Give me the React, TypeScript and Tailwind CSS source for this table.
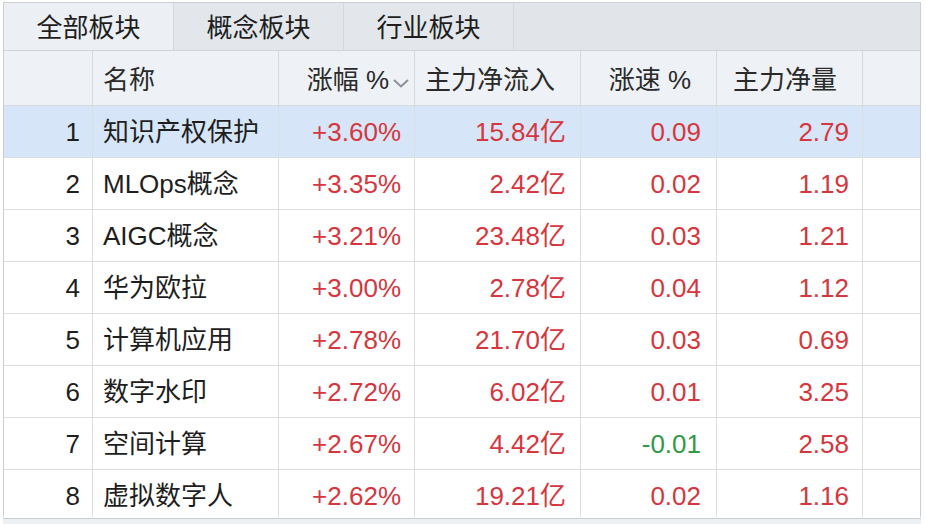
import React from "react";

type Row = {
  name: string;
  pct: string;
  inflow: string;
  speed: string;
  net: string;
};

const rows: Row[] = [
  { name: "知识产权保护", pct: "+3.60%", inflow: "15.84亿", speed: "0.09", net: "2.79" },
  { name: "MLOps概念", pct: "+3.35%", inflow: "2.42亿", speed: "0.02", net: "1.19" },
  { name: "AIGC概念", pct: "+3.21%", inflow: "23.48亿", speed: "0.03", net: "1.21" },
  { name: "华为欧拉", pct: "+3.00%", inflow: "2.78亿", speed: "0.04", net: "1.12" },
  { name: "计算机应用", pct: "+2.78%", inflow: "21.70亿", speed: "0.03", net: "0.69" },
  { name: "数字水印", pct: "+2.72%", inflow: "6.02亿", speed: "0.01", net: "3.25" },
  { name: "空间计算", pct: "+2.67%", inflow: "4.42亿", speed: "-0.01", net: "2.58" },
  { name: "虚拟数字人", pct: "+2.62%", inflow: "19.21亿", speed: "0.02", net: "1.16" },
];

const tabs = ["全部板块", "概念板块", "行业板块"];

const cols = "grid grid-cols-[89px_186px_136px_166px_136px_146px_1fr]";

function Chevron() {
  return (
    <svg width="18" height="10" viewBox="0 0 18 10" className="ml-[3px] mt-[6px]">
      <polyline points="2,2 9,8.5 16,2" fill="none" stroke="#8a9098" strokeWidth="2" />
    </svg>
  );
}

function HeadCell({ label, sort }: { label: string; sort?: boolean }) {
  return (
    <div className="flex items-center justify-end border-r border-[#d6dade] pr-[4px] pt-[4px]">
      <span>{label}</span>
      {sort ? <Chevron /> : <span className="w-[21px]" />}
    </div>
  );
}

export default function App() {
  return (
    <div
      className="w-[926px] h-[524px] bg-white pt-[2px] overflow-hidden text-[26px] leading-none text-[#1e1e1e]"
      style={{ fontFamily: '"Liberation Sans", "Noto Sans CJK SC", sans-serif' }}
    >
      <div className="ml-[3px] w-[918px] border border-b-0 border-[#c9ced4]">
        {/* tabs */}
        <div className="flex h-[48px] bg-[#e1e5ea] border-b border-[#cfd4da]">
          {tabs.map((t, i) => (
            <div
              key={t}
              className={`w-[170px] flex items-center justify-center pt-[2px] border-r border-[#d3d8de] ${
                i === 0 ? "bg-[#eceff3]" : "bg-[#e3e7eb]"
              }`}
            >
              {t}
            </div>
          ))}
        </div>

        {/* header */}
        <div className={`${cols} h-[55px] bg-[#eef2f6] border-b border-[#d6dade] text-[#2a2a2a]`}>
          <div className="border-r border-[#d6dade]" />
          <div className="flex items-center pl-[10px] pt-[4px] border-r border-[#d6dade]">名称</div>
          <HeadCell label="涨幅 %" sort />
          <HeadCell label="主力净流入" />
          <HeadCell label="涨速 %" />
          <HeadCell label="主力净量" />
          <div />
        </div>

        {/* body */}
        <div className="h-[411px] overflow-hidden">
          {rows.map((r, i) => (
            <div
              key={r.name}
              className={`${cols} h-[52px] border-b border-[#dcdfe2] ${i === 0 ? "bg-[#d6e6f8]" : "bg-white"}`}
            >
              <div className="flex items-center justify-end pr-[12px] border-r border-[#dcdfe2]">{i + 1}</div>
              <div className="flex items-center pl-[10px] border-r border-[#dcdfe2]">{r.name}</div>
              <div className="flex items-center justify-end pr-[13px] border-r border-[#dcdfe2] text-[#d6363d]">{r.pct}</div>
              <div className="flex items-center justify-end pr-[14px] border-r border-[#dcdfe2] text-[#d6363d]">{r.inflow}</div>
              <div
                className={`flex items-center justify-end pr-[15px] border-r border-[#dcdfe2] ${
                  r.speed.startsWith("-") ? "text-[#2f9a48]" : "text-[#d6363d]"
                }`}
              >
                {r.speed}
              </div>
              <div className="flex items-center justify-end pr-[13px] border-r border-[#dcdfe2] text-[#d6363d]">{r.net}</div>
              <div />
            </div>
          ))}
        </div>
      </div>

      {/* scrollbar strip */}
      <div className="ml-[3px] w-[918px] h-[8px] border-t border-[#c9ced4] mt-[1px] bg-[#eef1f4]" />
    </div>
  );
}
